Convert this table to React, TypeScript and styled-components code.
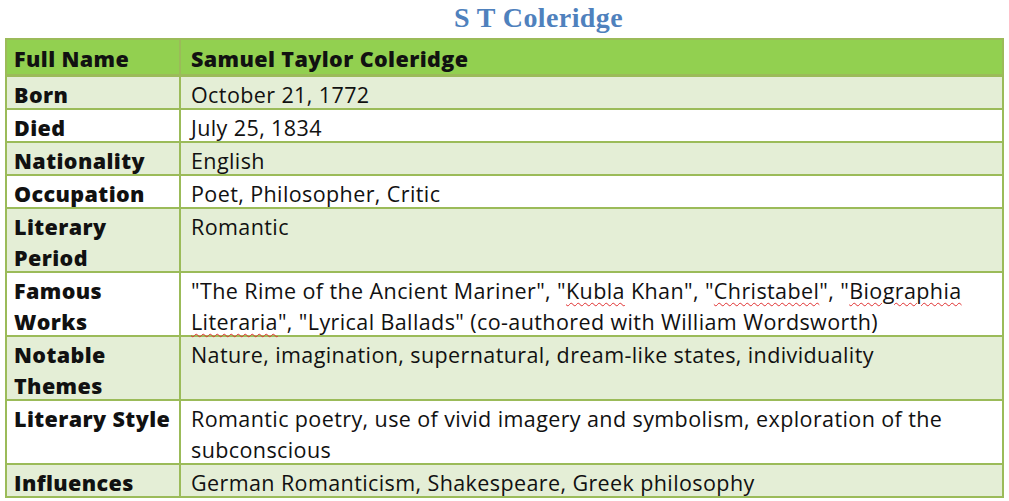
import React from "react";
import styled, { createGlobalStyle } from "styled-components";

const Global = createGlobalStyle`
  html, body { margin: 0; padding: 0; background: #ffffff; }
  body { font-family: "Open Sans", "Noto Sans", sans-serif; color: #111; }
`;

const Page = styled.div`
  padding: 0 5px;
  width: 999px;
`;

const Title = styled.h1`
  margin: 0;
  height: 38px;
  padding-left: 68px;
  box-sizing: border-box;
  text-align: center;
  font-family: "Liberation Serif", "DejaVu Serif", serif;
  font-weight: bold;
  font-size: 28px;
  line-height: 36px;
  color: #4f81bd;
  letter-spacing: 0.4px;
`;

const Table = styled.table`
  width: 999px;
  border-collapse: collapse;
  font-size: 21.5px;
  line-height: 31px;
  letter-spacing: 0.4px;
`;

const Row = styled.tr<{ $shade: "head" | "light" | "white" }>`
  background: ${(p) =>
    p.$shade === "head" ? "#92d050" : p.$shade === "light" ? "#e4eed6" : "#ffffff"};
`;

const Cell = styled.td<{ $label?: boolean; $head?: boolean }>`
  border: 2px solid #9bbb59;
  border-bottom-width: ${(p) => (p.$head ? "3px" : "2px")};
  padding: ${(p) => (p.$head ? "3px" : "2px")} 8px 0
    ${(p) => (p.$label ? "7px" : "10px")};
  vertical-align: top;
  font-weight: ${(p) => (p.$label || p.$head ? 800 : 400)};
  width: ${(p) => (p.$label ? "157px" : "auto")};
  color: #111;
  white-space: nowrap;
`;

const CellText = styled.div<{ $head?: boolean }>`
  margin-bottom: ${(p) => (p.$head ? "0" : "-2px")};
`;

const Spell = styled.span`
  text-decoration: underline wavy #e03030;
  text-decoration-thickness: 1px;
  text-underline-offset: 3px;
`;

type Item = { label: React.ReactNode; value: React.ReactNode };

const items: Item[] = [
  { label: "Born", value: "October 21, 1772" },
  { label: "Died", value: "July 25, 1834" },
  { label: "Nationality", value: "English" },
  { label: "Occupation", value: "Poet, Philosopher, Critic" },
  { label: <>Literary<br />Period</>, value: "Romantic" },
  {
    label: <>Famous<br />Works</>,
    value: (
      <>
        "The Rime of the Ancient Mariner", "<Spell>Kubla</Spell> Khan", "<Spell>Christabel</Spell>", "<Spell>Biographia</Spell>
        <br />
        <Spell>Literaria</Spell>", "Lyrical Ballads" (co-authored with William Wordsworth)
      </>
    ),
  },
  {
    label: <>Notable<br />Themes</>,
    value: "Nature, imagination, supernatural, dream-like states, individuality",
  },
  {
    label: "Literary Style",
    value: (
      <>
        Romantic poetry, use of vivid imagery and symbolism, exploration of the
        <br />
        subconscious
      </>
    ),
  },
  { label: "Influences", value: "German Romanticism, Shakespeare, Greek philosophy" },
];

export default function App() {
  return (
    <>
      <Global />
      <Page>
        <Title>S T Coleridge</Title>
        <Table>
          <tbody>
            <Row $shade="head">
              <Cell $head $label><CellText $head>Full Name</CellText></Cell>
              <Cell $head><CellText $head>Samuel Taylor Coleridge</CellText></Cell>
            </Row>
            {items.map((it, i) => (
              <Row key={i} $shade={i % 2 === 0 ? "light" : "white"}>
                <Cell $label><CellText>{it.label}</CellText></Cell>
                <Cell><CellText>{it.value}</CellText></Cell>
              </Row>
            ))}
          </tbody>
        </Table>
      </Page>
    </>
  );
}
